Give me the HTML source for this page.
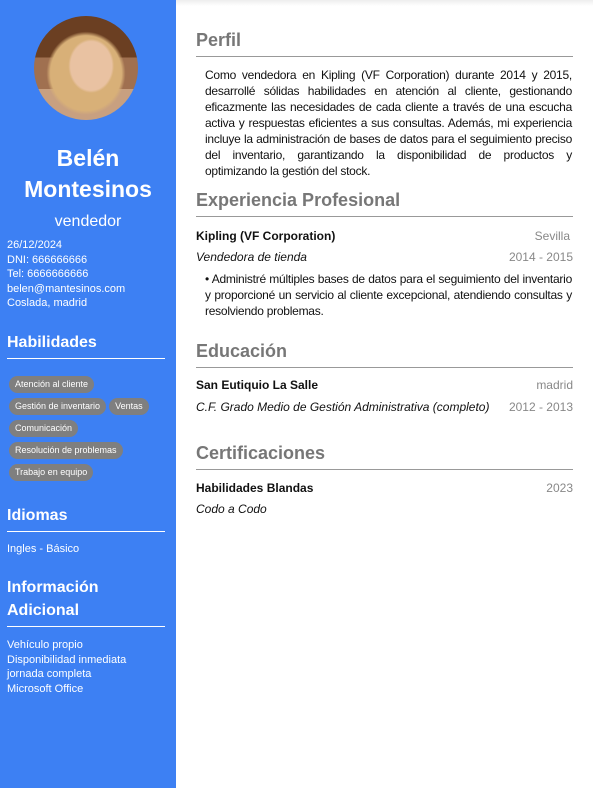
<!DOCTYPE html>
<html lang="es"><head><meta charset="utf-8"><style>
*{margin:0;padding:0;box-sizing:border-box}
body{width:593px;height:788px;overflow:hidden;font-family:"Liberation Sans",sans-serif;background:#fff;position:relative}
.side{position:absolute;left:0;top:0;width:176px;height:788px;background:#3d80f3;color:#fff}
.av{position:absolute;left:34px;top:16px;width:104px;height:104px;border-radius:50%;overflow:hidden;background:radial-gradient(ellipse 22% 26% at 55% 48%,#e9c2a2 0 90%,transparent 100%),radial-gradient(ellipse 38% 40% at 50% 55%,#d8b078 0 90%,transparent 100%),linear-gradient(#6b3f22 0 40%,#a07050 40% 70%,#c8a080 70%)}
.name{position:absolute;top:143px;left:0;width:176px;text-align:center;font-weight:bold;font-size:23px;line-height:31px}
.role{position:absolute;top:213px;left:0;width:176px;text-align:center;font-size:16px}
.contact{position:absolute;top:238px;left:7px;font-size:11px;line-height:14.6px}
.sh{position:absolute;left:7px;width:158px;font-weight:bold;font-size:16px;line-height:23px;border-bottom:1px solid #fff}
.chips{position:absolute;left:9px;top:376px;width:162px;display:flex;flex-wrap:wrap}
.chip{display:block;background:#7f7f7f;color:#fff;font-size:9px;height:17px;line-height:17px;padding:0 6px;border-radius:9px;margin:0 3px 5px 0}
.br{flex-basis:100%;height:0}
.txt{position:absolute;left:7px;font-size:11px;line-height:14.5px}
.h{position:absolute;left:196px;width:377px;color:#777;font-weight:bold;font-size:18px;line-height:24px;border-bottom:1px solid #999;padding-bottom:4px}
.p{position:absolute;left:205px;width:367px;font-size:12px;line-height:16px;text-align:justify;color:#111;letter-spacing:-0.25px;hyphens:auto;-webkit-hyphens:auto}
.row{position:absolute;left:196px;width:377px;font-size:12px;color:#111;display:flex;justify-content:space-between}
.row span.r{color:#888}
</style></head><body>
<div style="position:absolute;left:176px;top:0;width:417px;height:6px;background:linear-gradient(#eee,#fff)"></div>
<div class="side">
<div class="av"></div>
<div class="name">Belén<br>Montesinos</div>
<div class="role">vendedor</div>
<div class="contact">26/12/2024<br>DNI: 666666666<br>Tel: 6666666666<br>belen@mantesinos.com<br>Coslada, madrid</div>
<div class="sh" style="top:331px;padding-bottom:4px">Habilidades</div>
<div class="chips"><span class="chip">Atención al cliente</span><span class="br"></span><span class="chip">Gestión de inventario</span><span class="chip">Ventas</span><span class="br"></span><span class="chip">Comunicación</span><span class="br"></span><span class="chip">Resolución de problemas</span><span class="br"></span><span class="chip">Trabajo en equipo</span></div>
<div class="sh" style="top:504px;padding-bottom:4px">Idiomas</div>
<div class="txt" style="top:542px">Ingles - Básico</div>
<div class="sh" style="top:576px;padding-bottom:4px">Información<br>Adicional</div>
<div class="txt" style="top:638px">Vehículo propio<br>Disponibilidad inmediata<br>jornada completa<br>Microsoft Office</div>
</div>
<div class="h" style="top:28px">Perfil</div>
<div class="p" style="top:67px">Como vendedora en Kipling (VF Corporation) durante 2014 y 2015, desarrollé sólidas habilidades en atención al cliente, gestionando eficazmente las necesidades de cada cliente a través de una escucha activa y respuestas eficientes a sus consultas. Además, mi experiencia incluye la administración de bases de datos para el seguimiento preciso del inventario, garantizando la disponibilidad de productos y optimizando la gestión del stock.</div>
<div class="h" style="top:188px">Experiencia Profesional</div>
<div class="row" style="top:229px"><b>Kipling (VF Corporation)</b><span class="r" style="margin-right:3px">Sevilla</span></div>
<div class="row" style="top:250px"><i>Vendedora de tienda</i><span class="r">2014 - 2015</span></div>
<div class="p" style="top:271px">• Administré múltiples bases de datos para el seguimiento del inventario y proporcioné un servicio al cliente excepcional, atendiendo consultas y resolviendo problemas.</div>
<div class="h" style="top:339px">Educación</div>
<div class="row" style="top:378px"><b>San Eutiquio La Salle</b><span class="r">madrid</span></div>
<div class="row" style="top:400px"><i>C.F. Grado Medio de Gestión Administrativa (completo)</i><span class="r">2012 - 2013</span></div>
<div class="h" style="top:441px">Certificaciones</div>
<div class="row" style="top:481px"><b>Habilidades Blandas</b><span class="r">2023</span></div>
<div class="row" style="top:502px"><i>Codo a Codo</i></div>
</body></html>
